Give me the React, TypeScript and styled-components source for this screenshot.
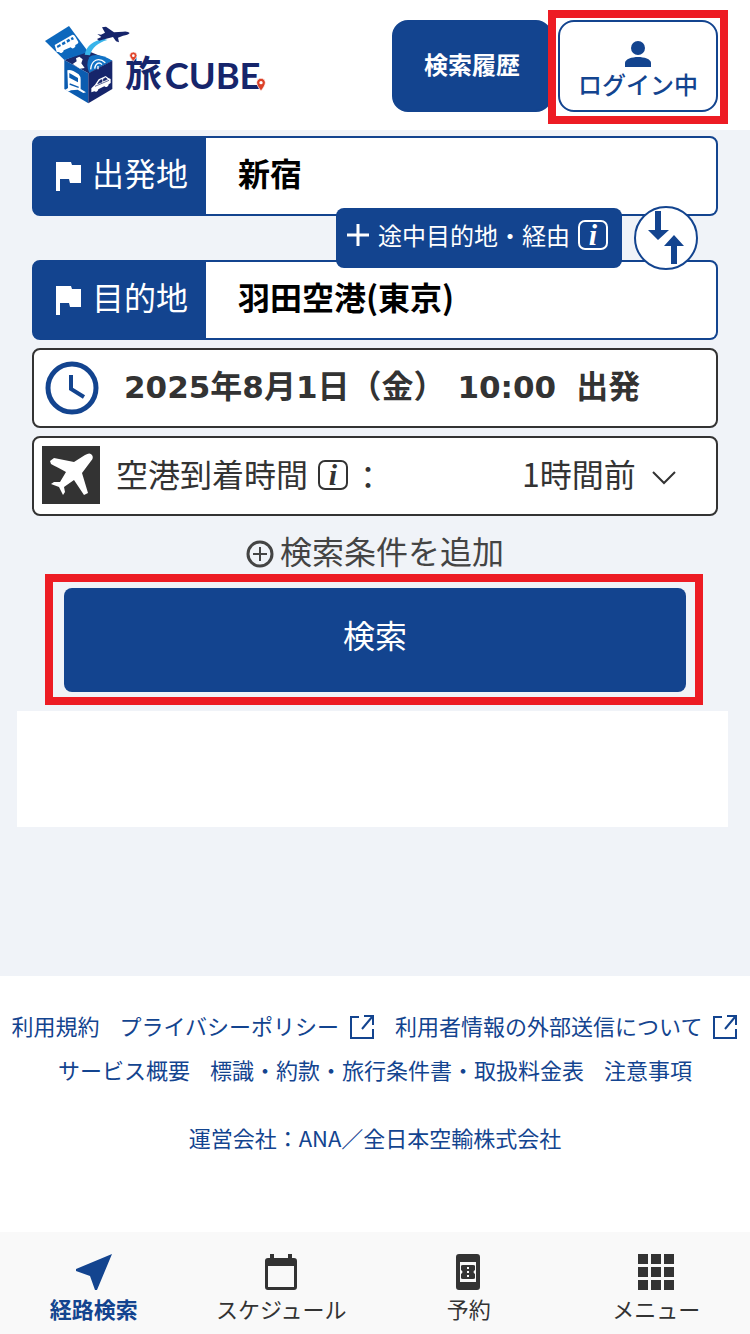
import React from "react";
import styled, { createGlobalStyle, css } from "styled-components";

const color = {
  brand: "#13448f",
  navy: "#16256b",
  ink: "#333333",
  frame: "#ed1c24",
  page: "#f0f3f8",
};

const GlobalStyle = createGlobalStyle`
  * { box-sizing: border-box; }
  body {
    margin: 0;
    background: #ffffff;
    color: ${color.ink};
    font-family: "Noto Sans CJK JP", "Noto Sans", sans-serif;
  }
  button, input, select { font: inherit; color: inherit; }
  button { cursor: pointer; }
  a { color: inherit; text-decoration: none; }
  svg { display: block; flex: none; }
`;

const Page = styled.div`
  display: flex;
  flex-direction: column;
  min-height: 100vh;
`;

const Header = styled.header`
  display: flex;
  align-items: center;
  justify-content: space-between;
  padding: 20px 32px 18px;
  background: #ffffff;
`;

const HeaderActions = styled.div`
  display: flex;
  gap: 6px;
`;

const HeaderButton = styled.button<{ $outline?: boolean }>`
  display: flex;
  flex-direction: column;
  align-items: center;
  justify-content: center;
  width: 160px;
  height: 92px;
  padding: ${(p) => (p.$outline ? "8px 0 0" : "0 0 4px")};
  border: 2px solid ${color.brand};
  border-radius: 16px;
  font-size: 24px;
  line-height: 32px;
  font-weight: ${(p) => (p.$outline ? 500 : 700)};
  background: ${(p) => (p.$outline ? "#ffffff" : color.brand)};
  color: ${(p) => (p.$outline ? color.brand : "#ffffff")};
`;

const Highlight = styled.div<{ $wide?: boolean }>`
  position: relative;
  display: flex;
  &::after {
    content: "";
    position: absolute;
    inset: ${(p) => (p.$wide ? "-14px -17px -13px -19px" : "-10px -10px -12px")};
    border: 8px solid ${color.frame};
    pointer-events: none;
  }
`;

const Main = styled.main`
  background: ${color.page};
  padding: 6px 0 149px;
`;

const SearchForm = styled.form`
  display: flex;
  flex-direction: column;
  padding: 0 32px;
`;

const box = css<{ $dark?: boolean }>`
  display: flex;
  height: 80px;
  width: 100%;
  border: 2px solid ${(p) => (p.$dark ? color.ink : color.brand)};
  border-radius: 8px;
  background: #ffffff;
`;

const PlaceRow = styled.div`
  ${box}
  background: ${color.brand};
`;

const PlaceLabel = styled.label`
  display: flex;
  align-items: center;
  gap: 8px;
  width: 172px;
  padding-left: 20px;
  color: #ffffff;
  font-size: 32px;
  line-height: 48px;
  white-space: nowrap;
`;

const Caption = styled.span`
  padding-bottom: 8px;
`;

const PlaceInput = styled.input`
  flex: 1;
  min-width: 0;
  padding: 0 32px 8px;
  border: 0;
  border-radius: 0 6px 6px 0;
  background: #ffffff;
  font-size: 32px;
  font-weight: 700;
  color: #000000;
  outline: none;
`;

const Between = styled.div`
  position: relative;
  z-index: 1;
  display: flex;
  align-items: center;
  justify-content: flex-end;
  gap: 12px;
  height: 44px;
  padding-right: 20px;
`;

const ViaButton = styled.button`
  display: flex;
  align-items: center;
  flex: none;
  gap: 8px;
  height: 60px;
  padding: 0 14px 6px 10px;
  border: 0;
  border-radius: 8px;
  background: ${color.brand};
  color: #ffffff;
  font-size: 24px;
  line-height: 36px;
`;

const InfoMark = styled.span`
  display: flex;
  align-items: center;
  justify-content: center;
  width: 30px;
  height: 30px;
  border: 2px solid currentColor;
  border-radius: 7px;
  font-family: "Liberation Serif", serif;
  font-style: italic;
  font-weight: 700;
  font-size: 30px;
  line-height: 26px;
`;

const SwapButton = styled.button`
  display: flex;
  align-items: center;
  justify-content: center;
  flex: none;
  width: 64px;
  height: 64px;
  padding: 0;
  border: 2px solid ${color.brand};
  border-radius: 50%;
  background: #ffffff;
  color: ${color.brand};
`;

const DateButton = styled.button`
  ${box}
  align-items: center;
  gap: 24px;
  margin-top: 8px;
  padding: 0 10px;
  font-size: 32px;
  font-weight: 700;
  line-height: 48px;
  color: ${color.ink};
`;

const DateText = styled.span`
  display: flex;
  align-items: baseline;
  padding-bottom: 6px;
  white-space: nowrap;
`;

const Num = styled.span`
  font-family: "DejaVu Sans", sans-serif;
  font-size: 31px;
`;

const Time = styled(Num)`
  padding: 0 20px 0 12px;
`;

const AirportRow = styled.div`
  ${box}
  align-items: center;
  gap: 16px;
  margin-top: 8px;
  padding: 0 40px 2px 8px;
  font-size: 32px;
  line-height: 48px;
`;

const AirportLabel = styled.label`
  display: flex;
  flex: 1;
  align-items: center;
  gap: 4px;
  white-space: nowrap;
`;

const AirportCaption = styled.span`
  padding: 0 6px 4px 0;
`;

const SelectWrap = styled.div`
  display: flex;
  align-items: center;
  gap: 16px;
  & > svg {
    margin-top: 6px;
  }
`;

const Select = styled.select`
  appearance: none;
  padding: 0 0 4px;
  border: 0;
  background: transparent;
  font-size: 32px;
  line-height: 48px;
`;

const AddCondition = styled.button`
  display: flex;
  align-items: center;
  justify-content: center;
  gap: 6px;
  height: 58px;
  padding: 18px 0 0;
  border: 0;
  background: transparent;
  color: #444444;
  font-size: 32px;
  line-height: 40px;
`;

const SearchWrap = styled.div`
  padding: 14px 32px 0;
`;

const SearchButton = styled.button`
  width: 100%;
  height: 104px;
  padding: 0 0 12px;
  border: 0;
  border-radius: 8px;
  background: ${color.brand};
  color: #ffffff;
  font-size: 32px;
`;

const Notice = styled.section`
  height: 116px;
  margin: 19px 22px 0 17px;
  background: #ffffff;
`;

const Footer = styled.footer`
  flex: 1;
  padding: 27px 8px 73px;
  color: ${color.brand};
  font-size: 22px;
  line-height: 44px;
  text-align: center;
`;

const FooterLinks = styled.nav`
  display: flex;
  flex-wrap: wrap;
  justify-content: center;
  column-gap: 20px;
`;

const FooterLink = styled.a`
  display: flex;
  align-items: center;
  gap: 10px;
  white-space: nowrap;
  & > svg {
    margin-top: 4px;
  }
`;

const Company = styled.a`
  display: block;
  margin-top: 24px;
`;

const TabBar = styled.nav`
  display: grid;
  grid-template-columns: repeat(4, 1fr);
  height: 102px;
  padding-top: 22px;
  background: #f9f9f9;
`;

const Tab = styled.a<{ $active?: boolean }>`
  display: flex;
  flex-direction: column;
  align-items: center;
  font-size: 22px;
  line-height: 36px;
  font-weight: ${(p) => (p.$active ? 700 : 400)};
  color: ${(p) => (p.$active ? color.brand : color.ink)};
`;

const Logo = () => (
  <svg width="250" height="88" viewBox="6 36 750 264" role="img" aria-label="旅CUBE">
    <path d="M103 150 172 122 247 152 175 190Z" fill="#1b2a6b" />
    <path d="M178 142C190 128 224 136 247 152L178 188Q166 164 178 142Z" fill="#1173c6" />
    <path d="M45 93 117 48 175 126 103 150Z" fill="#0d68bd" />
    <path d="M103 150 175 190V280L103 237Z" fill="#0b5cb0" />
    <path d="M175 190 247 152V237L175 280Z" fill={color.navy} />
    <path d="M164 134C170 106 190 92 222 86L232 90C204 98 186 112 180 136Z" fill="#38b4ea" />
    <path d="M182 178C184 150 206 140 226 158M194 176C196 160 208 154 216 164M204 178V168" fill="none" stroke="#fff" strokeWidth="4" />
    <path d="M128 162 140 154 138 145 148 140 158 148 154 160 164 174 150 176Z" fill="#fff" />
    <path d="M74 105 126 75Q132 73 136 80L145 96Q146 100 140 103L136 105A8 8 0 0 1 122 112L101 121A8 8 0 0 1 87 126L80 126Z" fill="#fff" />
    <path d="M80 108 90 102 93 108 83 114ZM95 99 104 94 107 101 98 106ZM109 91 117 86 121 93 112 98ZM122 84 128 81 132 88 125 91Z" fill="#0d68bd" />
    <path d="M112 181Q124 177 146 193Q152 199 152 209V237L168 247 160 249 143 239 123 241 117 244 104 241 114 234Z" fill="#fff" />
    <path d="M118 189 144 204V217L118 203Z" fill="#0b5cb0" />
    <path d="M119 222 146 232" stroke="#0b5cb0" strokeWidth="4" />
    <path d="M184 235 195 224 206 208 227 198 235 204 242 207V219L236 223A8 8 0 0 1 223 229L205 238A8 8 0 0 1 193 244L184 247Z" fill="#fff" />
    <path d="M203 221 210 211 216 209V216ZM220 207 227 203 232 208 220 213ZM195 229 237 211" fill={color.navy} stroke={color.navy} strokeWidth="2" />
    <path d="M202 72 213 74 225 68 216 52 228 50 252 67 279 65Q294 63 299 69Q294 75 279 77L264 83 267 97 258 94 249 81 226 87 207 92 201 87 214 81Z" fill={color.navy} />
    <text x="285" y="231" fontSize="110" fontWeight="700" fill={color.navy} fontFamily="'Noto Sans CJK JP', sans-serif">旅</text>
    <text x="404" y="238" fontSize="109" fontWeight="700" fill={color.navy} fontFamily="Lato, sans-serif">CUBE</text>
    <path d="M310 126A11 11 0 0 1 321 137Q321 142 310 154Q299 142 299 137A11 11 0 0 1 310 126Z" fill="#e0442a" stroke="#fff" strokeWidth="2" />
    <circle cx="310" cy="137" r="4" fill="#fff" />
    <path d="M693 205A13 13 0 0 1 706 218Q706 226 693 243Q680 226 680 218A13 13 0 0 1 693 205Z" fill="#dc4128" stroke="#fff" strokeWidth="2" />
    <circle cx="693" cy="218" r="5" fill="#fff" />
  </svg>
);

const PersonIcon = () => (
  <svg width="28" height="28" viewBox="0 0 28 28" fill="currentColor">
    <circle cx="14" cy="8" r="7" />
    <path d="M1 27V23C1 19 8 17 14 17S27 19 27 23V27Z" />
  </svg>
);

const FlagIcon = () => (
  <svg width="30" height="30" viewBox="0 0 30 30" fill="currentColor">
    <path d="M2 1H17L18 4H27V22H16L15 18H6V30H2Z" />
  </svg>
);

const PlusIcon = () => (
  <svg width="24" height="24" viewBox="0 0 24 24" stroke="currentColor" strokeWidth="3">
    <path d="M1 12H23M12 1V23" />
  </svg>
);

const SwapIcon = () => (
  <svg width="60" height="60" viewBox="0 0 60 60" fill="currentColor">
    <path d="M19 3H25V22H33L22 32 12 22H19Z" />
    <path d="M35 56H41V38H48L38 27 28 38H35Z" />
  </svg>
);

const ClockIcon = () => (
  <svg width="56" height="56" viewBox="0 0 56 56" fill="none" stroke={color.brand}>
    <circle cx="28" cy="28" r="24" strokeWidth="5" />
    <path d="M27 15V29L40 37" strokeWidth="4" />
  </svg>
);

const PlaneIcon = () => (
  <svg width="58" height="58" viewBox="0 0 58 58">
    <path d="M0 0H58V58H0Z" fill={color.ink} />
    <path
      d="M8 15 12 12 32 16 43 9Q48 6 50 9T49 15L40 27 46 47 42 49Q36 40 32 34L22 41 23 46 21 49 17 41 9 38 12 36 18 36 24 26Q15 21 9 18Z"
      fill="#fff"
    />
  </svg>
);

const ChevronIcon = () => (
  <svg width="24" height="14" viewBox="0 0 24 14" fill="none" stroke={color.ink} strokeWidth="2">
    <path d="M1 1 12 12 23 1" />
  </svg>
);

const CirclePlusIcon = () => (
  <svg width="28" height="28" viewBox="0 0 28 28" fill="none" stroke="currentColor" strokeWidth="2">
    <circle cx="14" cy="14" r="12" strokeWidth="3" />
    <path d="M14 7V21M7 14H21" />
  </svg>
);

const ExternalIcon = () => (
  <svg width="26" height="26" viewBox="0 0 26 26" fill="none" stroke="currentColor" strokeWidth="2">
    <path d="M10 3H2V24H24V15M13 15 23 3M15 2H24V11" />
  </svg>
);

const NavigateIcon = () => (
  <svg width="36" height="36" viewBox="0 0 36 36" fill="currentColor">
    <path d="M36 0 21 36H19L14 22 0 17V15Z" />
  </svg>
);

const CalendarIcon = () => (
  <svg width="36" height="36" viewBox="0 0 36 36" fill="currentColor">
    <path
      fillRule="evenodd"
      d="M7 0H11V4H25V0H29V4H31Q34 4 34 7V33Q34 36 31 36H5Q2 36 2 33V7Q2 4 5 4H7ZM5 12V33H31V12Z"
    />
  </svg>
);

const TicketIcon = () => (
  <svg width="36" height="36" viewBox="0 0 36 36" fill="currentColor">
    <path
      fillRule="evenodd"
      d="M8 0H26Q29 0 29 3V33Q29 36 26 36H8Q5 36 5 33V3Q5 0 8 0ZM9 8V28H25V8Z"
    />
    <path d="M10 12Q10 11 12 11H22Q24 11 24 12V16Q21 18 24 20V24Q24 25 22 25H12Q10 25 10 24V20Q13 18 10 16Z" />
    <path d="M17 13V24" stroke="#f9f9f9" strokeWidth="2" strokeDasharray="2 2" />
  </svg>
);

const GridIcon = () => (
  <svg width="36" height="36" viewBox="0 0 36 36" fill="currentColor">
    {[0, 13, 26].map((y) =>
      [0, 13, 26].map((x) => <rect key={`${x}-${y}`} x={x} y={y} width="10" height="10" />)
    )}
  </svg>
);

const footerLinks = [
  { label: "利用規約" },
  { label: "プライバシーポリシー", external: true },
  { label: "利用者情報の外部送信について", external: true },
  { label: "サービス概要" },
  { label: "標識・約款・旅行条件書・取扱料金表" },
  { label: "注意事項" },
];

const tabs = [
  { label: "経路検索", icon: <NavigateIcon />, active: true },
  { label: "スケジュール", icon: <CalendarIcon /> },
  { label: "予約", icon: <TicketIcon /> },
  { label: "メニュー", icon: <GridIcon /> },
];

export default function App() {
  return (
    <Page>
      <GlobalStyle />
      <Header>
        <a href="#top">
          <Logo />
        </a>
        <HeaderActions>
          <HeaderButton type="button">検索履歴</HeaderButton>
          <Highlight>
            <HeaderButton type="button" $outline>
              <PersonIcon />
              ログイン中
            </HeaderButton>
          </Highlight>
        </HeaderActions>
      </Header>

      <Main>
        <SearchForm onSubmit={(e) => e.preventDefault()}>
          <PlaceRow>
            <PlaceLabel htmlFor="from">
              <FlagIcon />
              <Caption>出発地</Caption>
            </PlaceLabel>
            <PlaceInput id="from" defaultValue="新宿" />
          </PlaceRow>
          <Between>
            <ViaButton type="button">
              <PlusIcon />
              途中目的地・経由
              <InfoMark>i</InfoMark>
            </ViaButton>
            <SwapButton type="button" aria-label="出発地と目的地を入れ替え">
              <SwapIcon />
            </SwapButton>
          </Between>
          <PlaceRow>
            <PlaceLabel htmlFor="to">
              <FlagIcon />
              <Caption>目的地</Caption>
            </PlaceLabel>
            <PlaceInput id="to" defaultValue="羽田空港(東京)" />
          </PlaceRow>

          <DateButton type="button" $dark>
            <ClockIcon />
            <DateText>
              <Num>2025</Num>年<Num>8</Num>月<Num>1</Num>日（金）
              <Time>10:00</Time>
              出発
            </DateText>
          </DateButton>

          <AirportRow $dark>
            <PlaneIcon />
            <AirportLabel htmlFor="lead">
              <AirportCaption>空港到着時間</AirportCaption>
              <InfoMark>i</InfoMark>：
            </AirportLabel>
            <SelectWrap>
              <Select id="lead" defaultValue="1">
                <option value="1">1時間前</option>
              </Select>
              <ChevronIcon />
            </SelectWrap>
          </AirportRow>

          <AddCondition type="button">
            <CirclePlusIcon />
            <Caption>検索条件を追加</Caption>
          </AddCondition>

          <SearchWrap>
            <Highlight $wide>
              <SearchButton type="submit">検索</SearchButton>
            </Highlight>
          </SearchWrap>
        </SearchForm>
        <Notice />
      </Main>

      <Footer>
        <FooterLinks>
          {footerLinks.map((l) => (
            <FooterLink key={l.label} href="#footer">
              {l.label}
              {l.external && <ExternalIcon />}
            </FooterLink>
          ))}
        </FooterLinks>
        <Company href="#company">運営会社：ANA／全日本空輸株式会社</Company>
      </Footer>

      <TabBar>
        {tabs.map((t) => (
          <Tab key={t.label} href="#tab" $active={t.active}>
            {t.icon}
            {t.label}
          </Tab>
        ))}
      </TabBar>
    </Page>
  );
}
